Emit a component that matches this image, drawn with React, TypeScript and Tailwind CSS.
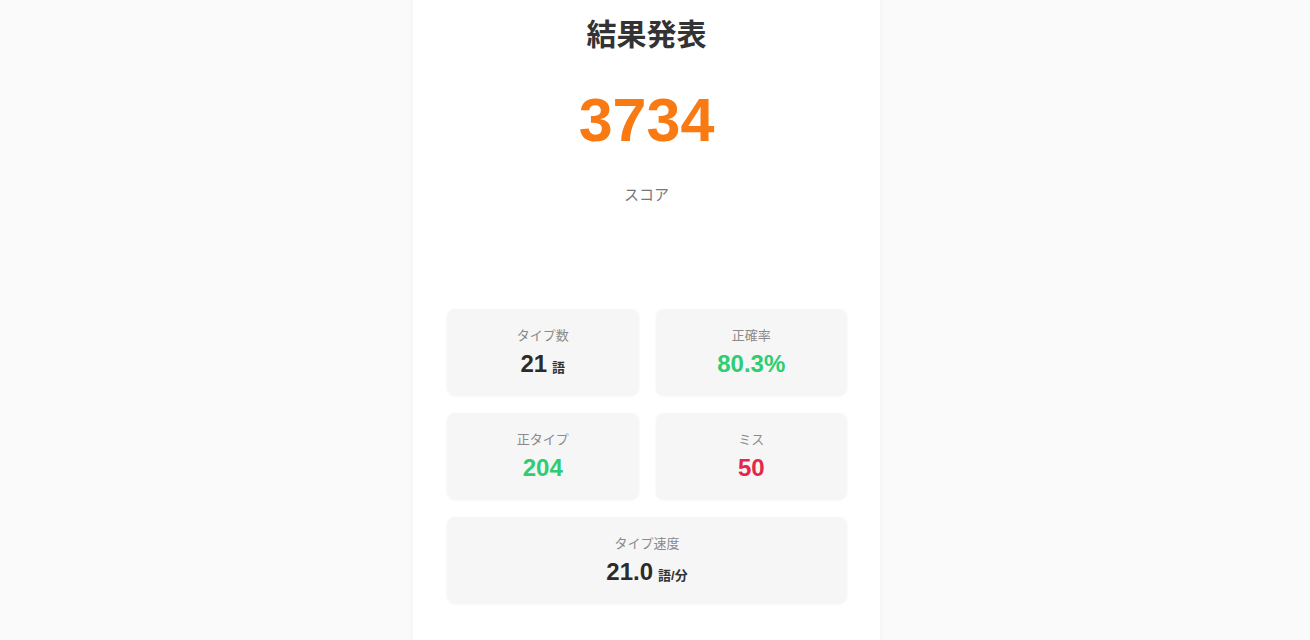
const font = { fontFamily: '"Liberation Sans", "Noto Sans CJK JP", sans-serif' }

type Stat = {
  label: string
  value: string
  unit?: string
  color: string
  wide?: boolean
}

const stats: Stat[] = [
  { label: 'タイプ数', value: '21', unit: '語', color: 'text-[#2b2b2b]' },
  { label: '正確率', value: '80.3%', color: 'text-[#2fcc71]' },
  { label: '正タイプ', value: '204', color: 'text-[#2fcc71]' },
  { label: 'ミス', value: '50', color: 'text-[#e3284a]' },
  { label: 'タイプ速度', value: '21.0', unit: '語/分', color: 'text-[#2b2b2b]', wide: true },
]

function StatBox({ stat }: { stat: Stat }) {
  return (
    <div
      className={`flex h-[86px] flex-col items-center justify-center rounded-lg bg-[#f6f6f6] shadow-[0_1px_3px_rgba(0,0,0,0.05)] ${
        stat.wide ? 'col-span-2' : ''
      }`}
    >
      <div className="text-[13px] leading-[19px] text-[#8a8a8a]">{stat.label}</div>
      <div className={`mt-[4px] flex items-baseline font-bold ${stat.color}`}>
        <span className="text-[24px] leading-[29px]">{stat.value}</span>
        {stat.unit && <span className="ml-[5px] text-[13px] text-[#333]">{stat.unit}</span>}
      </div>
    </div>
  )
}

export default function App() {
  return (
    <div className="flex min-h-screen justify-center bg-[#fafafa] pr-[17px]" style={font}>
      <div className="flex min-h-[640px] w-[467px] flex-col items-center bg-white px-[33px] pt-[17px] pb-[36px] shadow-[0_0_6px_rgba(0,0,0,0.04)]">
        <h1 className="text-[30px] leading-[36px] font-bold text-[#333]">結果発表</h1>
        <div className="mt-[37px] text-[61px] leading-[60px] font-bold text-[#f97a12]">3734</div>
        <div className="mt-[34px] text-[15px] leading-[22px] text-[#777]">スコア</div>
        <div className="mt-[103px] grid w-full grid-cols-2 gap-x-[17px] gap-y-[18px] pl-px">
          {stats.map((s) => (
            <StatBox key={s.label} stat={s} />
          ))}
        </div>
      </div>
    </div>
  )
}
